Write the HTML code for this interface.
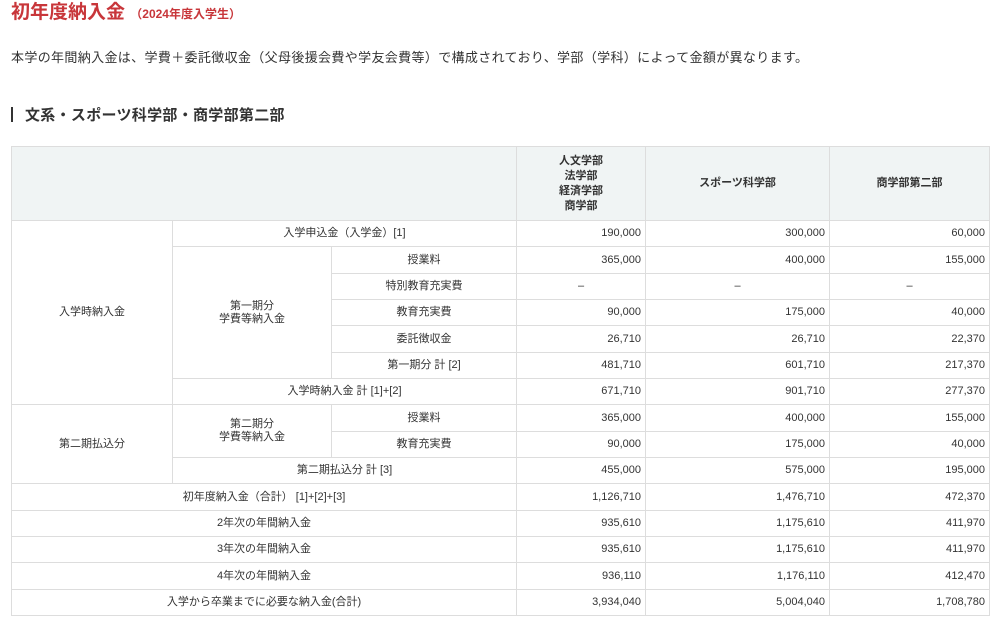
<!DOCTYPE html>
<html><head><meta charset="utf-8"><style>
body{margin:0;background:#fff;font-family:"Liberation Sans","Noto Sans CJK JP",sans-serif;color:#333;width:1000px;height:624px;overflow:hidden;position:relative}
h1{position:absolute;left:11px;top:-3px;margin:0;font-size:19px;color:#c8363a;font-weight:bold}
h1 small{font-size:12px}
p{position:absolute;left:11px;top:47px;margin:0;font-size:13px;letter-spacing:0.35px}
h2{position:absolute;left:11px;top:104px;margin:0;font-size:15px;font-weight:bold;color:#333;letter-spacing:0.3px}
h2 span{display:inline-block;width:2px;height:15px;background:#333;vertical-align:-2px;margin-right:12px}
table{position:absolute;left:11px;top:146px;border-collapse:collapse;table-layout:fixed;width:978px;font-size:11px}
td,th{border:1px solid #ddd;text-align:center;padding:0 4px;height:25.35px;line-height:13px}
th{background:#f0f4f4;font-weight:bold;height:73px;line-height:15px}
td.n{text-align:right}
</style></head><body>
<h1>初年度納入金 <small>（2024年度入学生）</small></h1>
<p>本学の年間納入金は、学費＋委託徴収金（父母後援会費や学友会費等）で構成されており、学部（学科）によって金額が異なります。</p>
<h2><span></span>文系・スポーツ科学部・商学部第二部</h2>
<table>
<colgroup><col style="width:161px"><col style="width:159px"><col style="width:185px"><col style="width:129px"><col style="width:184px"><col style="width:160px"></colgroup>
<tr><th colspan="3"></th><th>人文学部<br>法学部<br>経済学部<br>商学部</th><th>スポーツ科学部</th><th>商学部第二部</th></tr>
<tr><td rowspan="7">入学時納入金</td><td colspan="2">入学申込金（入学金）[1]</td><td class="n">190,000</td><td class="n">300,000</td><td class="n">60,000</td></tr>
<tr><td rowspan="5">第一期分<br>学費等納入金</td><td>授業料</td><td class="n">365,000</td><td class="n">400,000</td><td class="n">155,000</td></tr>
<tr><td>特別教育充実費</td><td>–</td><td>–</td><td>–</td></tr>
<tr><td>教育充実費</td><td class="n">90,000</td><td class="n">175,000</td><td class="n">40,000</td></tr>
<tr><td>委託徴収金</td><td class="n">26,710</td><td class="n">26,710</td><td class="n">22,370</td></tr>
<tr><td>第一期分 計 [2]</td><td class="n">481,710</td><td class="n">601,710</td><td class="n">217,370</td></tr>
<tr><td colspan="2">入学時納入金 計 [1]+[2]</td><td class="n">671,710</td><td class="n">901,710</td><td class="n">277,370</td></tr>
<tr><td rowspan="3">第二期払込分</td><td rowspan="2">第二期分<br>学費等納入金</td><td>授業料</td><td class="n">365,000</td><td class="n">400,000</td><td class="n">155,000</td></tr>
<tr><td>教育充実費</td><td class="n">90,000</td><td class="n">175,000</td><td class="n">40,000</td></tr>
<tr><td colspan="2">第二期払込分 計 [3]</td><td class="n">455,000</td><td class="n">575,000</td><td class="n">195,000</td></tr>
<tr><td colspan="3">初年度納入金（合計） [1]+[2]+[3]</td><td class="n">1,126,710</td><td class="n">1,476,710</td><td class="n">472,370</td></tr>
<tr><td colspan="3">2年次の年間納入金</td><td class="n">935,610</td><td class="n">1,175,610</td><td class="n">411,970</td></tr>
<tr><td colspan="3">3年次の年間納入金</td><td class="n">935,610</td><td class="n">1,175,610</td><td class="n">411,970</td></tr>
<tr><td colspan="3">4年次の年間納入金</td><td class="n">936,110</td><td class="n">1,176,110</td><td class="n">412,470</td></tr>
<tr><td colspan="3">入学から卒業までに必要な納入金(合計)</td><td class="n">3,934,040</td><td class="n">5,004,040</td><td class="n">1,708,780</td></tr>
</table>
</body></html>
